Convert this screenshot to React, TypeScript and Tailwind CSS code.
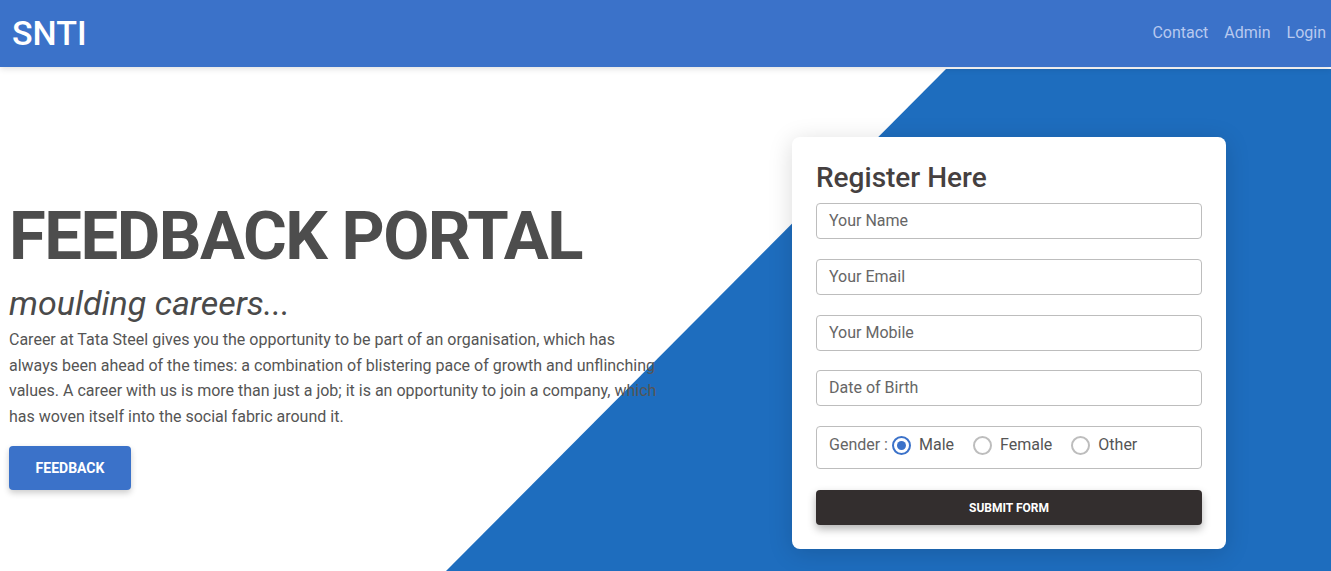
import React from 'react';

const fields = ['Your Name', 'Your Email', 'Your Mobile', 'Date of Birth'];
const genders = ['Male', 'Female', 'Other'];

const Radio: React.FC<{ checked?: boolean }> = ({ checked }) => (
  <span
    className={
      checked
        ? 'w-[19px] h-[19px] rounded-full border-2 border-[#3b72c9] flex items-center justify-center'
        : 'w-[19px] h-[19px] rounded-full border-2 border-[#bdbdbd]'
    }
  >
    {checked && <span className="w-[9px] h-[9px] rounded-full bg-[#3b72c9]" />}
  </span>
);

export default function App() {
  return (
    <div className="w-[1331px] h-[571px] overflow-hidden bg-white font-['Roboto',sans-serif] text-[#4f4f4f]">
      {/* Navbar */}
      <nav className="relative z-20 h-[67px] bg-[#3b72c9] flex items-center justify-between pl-[12px] pr-[5px] shadow-[0_2px_6px_rgba(0,0,0,0.12)]">
        <span className="text-white text-[34px] font-medium leading-none -mt-[2px]">SNTI</span>
        <div className="flex items-center gap-4 text-[16px] text-[#b8c9ef] -mt-px">
          <a>Contact</a>
          <a>Admin</a>
          <a>Login</a>
        </div>
      </nav>

      {/* Hero */}
      <section className="relative h-[504px] mt-px">
        {/* diagonal background */}
        <div className="absolute inset-0 top-px bg-[#1e6dbe] [clip-path:polygon(946px_0,100%_0,100%_100%,445px_100%)]" />

        <div className="relative z-10 flex h-full">
          {/* Left copy */}
          <div className="w-[660px] pl-[9px] pt-[126px]">
            <h1 className="text-[67px] font-bold leading-[84px] tracking-[-1.5px] text-[#4d4d4d]">FEEDBACK PORTAL</h1>
            <p className="mt-[5px] text-[34px] italic font-normal leading-[40px] text-[#4a4a4a]">moulding careers...</p>
            <p className="mt-[4px] w-[655px] text-[16px] leading-[25.6px] text-[#555]">
              Career at Tata Steel gives you the opportunity to be part of an organisation, which has always been ahead of the
              times: a combination of blistering pace of growth and unflinching values. A career with us is more than just a
              job; it is an opportunity to join a company, which has woven itself into the social fabric around it.
            </p>
            <button className="mt-[17px] h-[44px] w-[122px] rounded bg-[#3b72c9] text-white text-[14px] font-bold uppercase shadow-[0_3px_6px_rgba(0,0,0,0.2)]">
              Feedback
            </button>
          </div>

          {/* Register card */}
          <div className="ml-auto mr-[105px] mt-[69px] h-[412px] w-[434px] rounded-lg bg-white px-6 pt-[23px] shadow-[0_4px_24px_rgba(0,0,0,0.15)]">
            <h2 className="text-[28px] font-medium leading-[36px] text-[#454040]">Register Here</h2>
            <div className="mt-[7px] flex flex-col gap-[19.75px]">
              {fields.map((f) => (
                <div
                  key={f}
                  className="h-[36px] rounded border border-[#bdbdbd] px-3 flex items-center text-[16px] text-[#666]"
                >
                  {f}
                </div>
              ))}
              <div className="h-[43px] rounded border border-[#bdbdbd] pl-3 pt-[6px] flex items-start text-[16px]">
                <span className="text-[#666] mr-[4px] leading-[24px]">Gender :</span>
                {genders.map((g, i) => (
                  <label key={g} className="flex items-center gap-[8px] mr-[19px] text-[#555] leading-[24px]">
                    <Radio checked={i === 0} />
                    {g}
                  </label>
                ))}
              </div>
            </div>
            <button className="mt-[21px] h-[35px] w-full rounded bg-[#332e2e] text-white text-[12px] font-bold uppercase shadow-[0_4px_8px_rgba(0,0,0,0.3)]">
              Submit Form
            </button>
          </div>
        </div>
      </section>
    </div>
  );
}
